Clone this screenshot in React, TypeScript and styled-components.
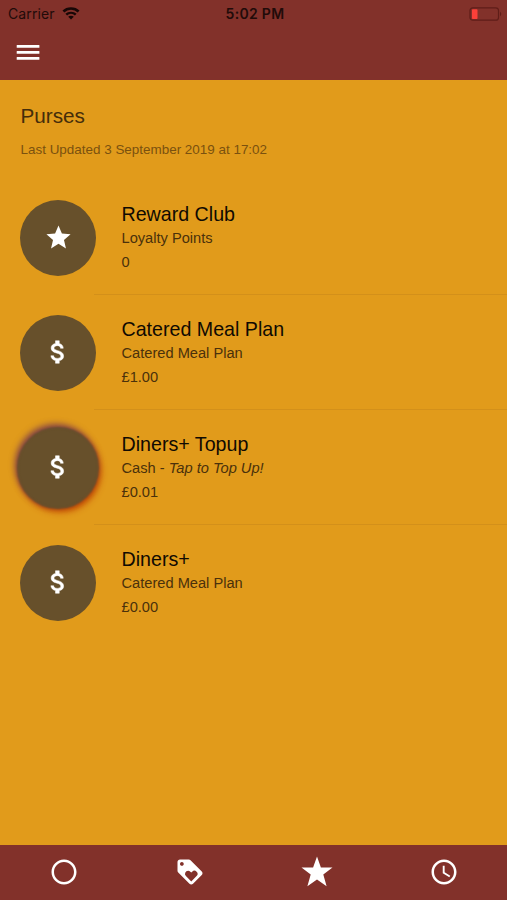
import React from "react";
import styled, { createGlobalStyle, css } from "styled-components";
import {
  MdAttachMoney,
  MdLoyalty,
  MdRadioButtonUnchecked,
  MdSchedule,
  MdStar,
} from "react-icons/md";

const colors = {
  bar: "#82312a",
  page: "#e19b1b",
  avatar: "#67502b",
  white: "#ffffff",
};

const GlobalStyle = createGlobalStyle`
  * { box-sizing: border-box; }
  body { margin: 0; background: ${colors.page}; }
`;

const Screen = styled.div`
  display: flex;
  flex-direction: column;
  width: 507px;
  height: 900px;
  overflow: hidden;
  background: ${colors.page};
  font-family: "Liberation Sans", Arial, sans-serif;
`;

const Header = styled.header`
  flex: none;
  height: 80px;
  background: ${colors.bar};
`;

const StatusBar = styled.div`
  display: grid;
  grid-template-columns: 1fr auto 1fr;
  align-items: center;
  height: 27px;
  padding: 0 5px 0 8px;
  color: #210b09;
  font-family: Inter, sans-serif;
  font-size: 14px;
  line-height: 20px;
`;

const Carrier = styled.div`
  display: flex;
  align-items: center;
  gap: 7px;
  letter-spacing: 0.1px;
`;

const Time = styled.div`
  font-weight: 600;
  letter-spacing: 0.3px;
`;

const BatterySlot = styled.div`
  display: flex;
  justify-content: flex-end;
`;

const Toolbar = styled.div`
  display: flex;
  align-items: center;
  height: 50px;
  padding-left: 13px;
`;

const IconButton = styled.button`
  display: flex;
  padding: 0;
  border: 0;
  background: none;
  color: ${colors.white};
`;

const Content = styled.main`
  flex: 1;
  padding-top: 24px;
`;

const PageTitle = styled.h1`
  margin: 0 0 0 20.5px;
  color: #452d0a;
  font-size: 20.7px;
  font-weight: 400;
  line-height: 24px;
`;

const Updated = styled.p`
  margin: 13px 0 21px 20.5px;
  color: #7a510f;
  font-size: 13.45px;
  line-height: 18px;
`;

const PurseList = styled.ul`
  margin: 0;
  padding: 0;
  list-style: none;
`;

const PurseRow = styled.li`
  display: flex;
  height: 115px;
  padding-left: 20.4px;
`;

const AvatarColumn = styled.div`
  flex: none;
  width: 73.6px;
  padding-top: 20px;
`;

const Avatar = styled.div<{ $glow: boolean }>`
  display: flex;
  align-items: center;
  justify-content: center;
  width: 76px;
  height: 76px;
  padding-bottom: 2px;
  border-radius: 50%;
  background: ${colors.avatar};
  color: ${colors.white};
  ${({ $glow }) =>
    $glow &&
    css`
      box-shadow:
        0 0 2px 3px ${colors.avatar},
        -2px -3px 6px 3px rgba(91, 34, 90, 0.7),
        2px 3px 6px 3px rgba(190, 61, 0, 0.9);
    `}
`;

const PurseText = styled.div<{ $divider: boolean }>`
  flex: 1;
  padding: 22px 0 0 27.5px;
  border-bottom: 1px solid ${({ $divider }) => ($divider ? "#d3901a" : "transparent")};
`;

const PurseName = styled.h2`
  margin: 0;
  color: #100a02;
  font-size: 19.65px;
  font-weight: 400;
  line-height: 24px;
`;

const PurseDetail = styled.p`
  margin: 0;
  color: #4a310b;
  font-size: 14.65px;
  line-height: 24.4px;
`;

const MoneyIcon = styled(MdAttachMoney)`
  path:not([fill="none"]) {
    stroke: currentColor;
    stroke-width: 0.4px;
  }
`;

const TabBar = styled.nav`
  display: grid;
  grid-template-columns: repeat(4, 1fr);
  flex: none;
  height: 55px;
  background: ${colors.bar};
`;

const Tab = styled.button`
  display: flex;
  align-items: center;
  justify-content: center;
  padding: 0 0 1px;
  border: 0;
  background: none;
  color: ${colors.white};

  &:first-child {
    padding-left: 1px;
  }
`;

const MenuIcon = () => (
  <svg width="30" height="30" viewBox="0 0 30 30" fill="currentColor">
    <rect x="3.700" y="8" width="22.700" height="2.800" rx=".3" />
    <rect x="3.700" y="14" width="22.700" height="2.800" rx=".3" />
    <rect x="3.700" y="20" width="22.700" height="2.800" rx=".3" />
  </svg>
);

const WifiIcon = () => (
  <svg width="18" height="13" viewBox="0 0 18 13" fill="#170706">
    <path d="M9 .3C5.600 .3 2.600 1.500.5 3.600L2.300 5.400A9.500 9.500 0 0 1 15.700 5.400L17.500 3.600C15.400 1.500 12.400.3 9 .3Z" />
    <path d="M9 4.700C6.800 4.700 4.900 5.500 3.400 6.700L5.100 8.400A5.700 5.700 0 0 1 12.900 8.400L14.600 6.700C13.100 5.500 11.200 4.700 9 4.700Z" />
    <path d="M9 8.800C7.900 8.800 6.900 9.200 6.200 9.700L9 12.500 11.800 9.700C11.100 9.200 10.100 8.800 9 8.800Z" />
  </svg>
);

const BatteryIcon = () => (
  <svg width="33" height="14" viewBox="0 0 33 14" fill="none">
    <rect x="1" y=".8" width="28.500" height="12.400" rx="2.800" stroke="#5f1d18" strokeWidth="1.200" />
    <path d="M31 4.800C32.700 5.500 32.700 8.500 31 9.200Z" fill="#5f1d18" />
    <rect x="3" y="2.300" width="5.500" height="9.600" rx=".7" fill="#fb4039" />
  </svg>
);

const PointedStarIcon = () => (
  <svg width="32" height="32" viewBox="0 0 32 32" fill="currentColor">
    <path d="M16 .5 19.900 11.500H31.500L22.300 18.500 25.600 30.200 16 23.500 6.400 30.200 9.700 18.500.5 11.500H12.100Z" />
  </svg>
);

type Purse = {
  name: string;
  kind: string;
  hint?: string;
  amount: string;
  icon: "star" | "money";
};

const purses: Purse[] = [
  { name: "Reward Club", kind: "Loyalty Points", amount: "0", icon: "star" },
  { name: "Catered Meal Plan", kind: "Catered Meal Plan", amount: "£1.00", icon: "money" },
  { name: "Diners+ Topup", kind: "Cash - ", hint: "Tap to Top Up!", amount: "£0.01", icon: "money" },
  { name: "Diners+", kind: "Catered Meal Plan", amount: "£0.00", icon: "money" },
];

export default function App() {
  return (
    <Screen>
      <GlobalStyle />
      <Header>
        <StatusBar>
          <Carrier>
            Carrier
            <WifiIcon />
          </Carrier>
          <Time>5:02 PM</Time>
          <BatterySlot>
            <BatteryIcon />
          </BatterySlot>
        </StatusBar>
        <Toolbar>
          <IconButton aria-label="Menu">
            <MenuIcon />
          </IconButton>
        </Toolbar>
      </Header>
      <Content>
        <PageTitle>Purses</PageTitle>
        <Updated>Last Updated 3 September 2019 at 17:02</Updated>
        <PurseList>
          {purses.map((purse, index) => (
            <PurseRow key={purse.name}>
              <AvatarColumn>
                <Avatar $glow={Boolean(purse.hint)}>
                  {purse.icon === "star" ? <MdStar size={29} /> : <MoneyIcon size={30} />}
                </Avatar>
              </AvatarColumn>
              <PurseText $divider={index < purses.length - 1}>
                <PurseName>{purse.name}</PurseName>
                <PurseDetail>
                  {purse.kind}
                  {purse.hint && <em>{purse.hint}</em>}
                </PurseDetail>
                <PurseDetail>{purse.amount}</PurseDetail>
              </PurseText>
            </PurseRow>
          ))}
        </PurseList>
      </Content>
      <TabBar>
        <Tab aria-label="Home">
          <MdRadioButtonUnchecked size={30} />
        </Tab>
        <Tab aria-label="Offers">
          <MdLoyalty size={30} />
        </Tab>
        <Tab aria-label="Rewards">
          <PointedStarIcon />
        </Tab>
        <Tab aria-label="History">
          <MdSchedule size={30} />
        </Tab>
      </TabBar>
    </Screen>
  );
}
